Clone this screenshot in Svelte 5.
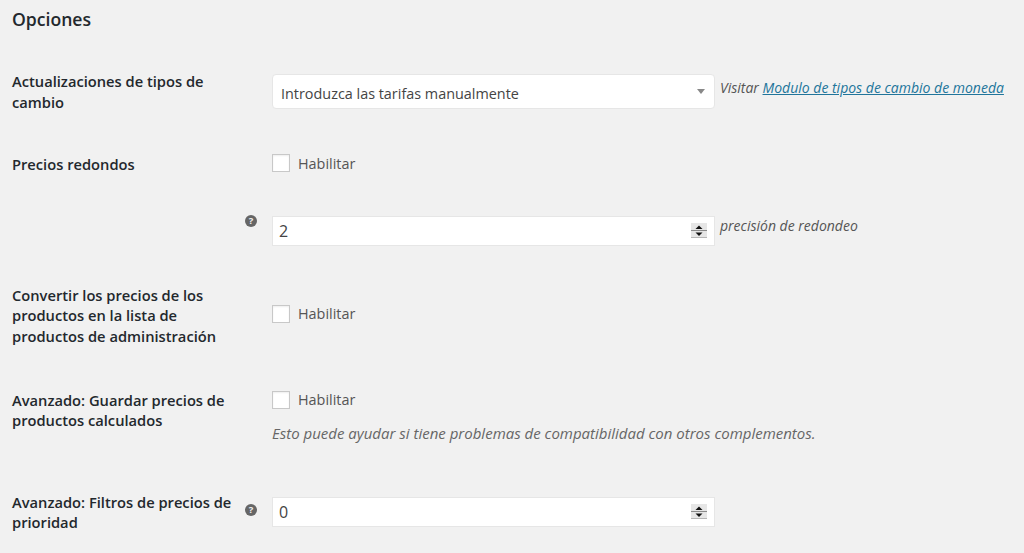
<!-- WooCommerce-style currency options form -->
<script>
  const enableLabel = "Habilitar";
</script>

{#snippet help()}
  <span class="help">?</span>
{/snippet}

{#snippet spinner()}
  <span class="spin">
    <svg width="16" height="15" viewBox="0 0 16 15">
      <rect x="0" y="0" width="16" height="15" fill="#e6e6e6" />
      <rect x="0" y="7" width="16" height="1" fill="#8a8a8a" />
      <rect x="0" y="14" width="16" height="1" fill="#b5b5b5" />
      <path d="M8 2.5 11.5 6h-7z" fill="#111" />
      <path d="M8 13 4.5 9.5h7z" fill="#111" />
    </svg>
  </span>
{/snippet}

{#snippet checkbox()}
  <label class="check">
    <span class="box"></span>
    <span>{enableLabel}</span>
  </label>
{/snippet}

<main class="page">
  <h2>Opciones</h2>

  <section class="row r1">
    <div class="label">Actualizaciones de tipos de cambio</div>
    <div class="tip"></div>
    <div class="field inline">
      <div class="select">
        <span class="value">Introduzca las tarifas manualmente</span>
        <span class="caret"></span>
      </div>
      <span class="note">Visitar <a href="#top">Modulo de tipos de cambio de moneda</a></span>
    </div>
  </section>

  <section class="row r2">
    <div class="label">Precios redondos</div>
    <div class="tip"></div>
    <div class="field">{@render checkbox()}</div>
  </section>

  <section class="row r3">
    <div class="label"></div>
    <div class="tip">{@render help()}</div>
    <div class="field inline">
      <div class="number"><span>2</span>{@render spinner()}</div>
      <span class="note">precisión de redondeo</span>
    </div>
  </section>

  <section class="row r4">
    <div class="label">Convertir los precios de los productos en la lista de productos de administración</div>
    <div class="tip"></div>
    <div class="field">{@render checkbox()}</div>
  </section>

  <section class="row r5">
    <div class="label">Avanzado: Guardar precios de productos calculados</div>
    <div class="tip"></div>
    <div class="field">
      {@render checkbox()}
      <p class="desc">Esto puede ayudar si tiene problemas de compatibilidad con otros complementos.</p>
    </div>
  </section>

  <section class="row r6">
    <div class="label">Avanzado: Filtros de precios de prioridad</div>
    <div class="tip">{@render help()}</div>
    <div class="field">
      <div class="number"><span>0</span>{@render spinner()}</div>
    </div>
  </section>
</main>

<style>
  :global(body) {
    margin: 0;
    background: #f1f1f1;
  }
  .page {
    height: 553px;
    overflow: hidden;
    padding: 9px 0 0 12px;
    box-sizing: border-box;
    font-family: "Open Sans", "Liberation Sans", sans-serif;
    font-size: 14.4px;
    color: #555;
  }
  h2 {
    margin: 0;
    font-size: 17.6px;
    line-height: 21px;
    font-weight: 600;
    color: #23282d;
  }
  .row {
    display: grid;
    grid-template-columns: 228px 32px 1fr;
    align-items: start;
  }
  .r1 {
    margin-top: 41px;
  }
  .r2 {
    margin-top: 42px;
  }
  .r3 {
    margin-top: 41px;
  }
  .r4 {
    margin-top: 39px;
  }
  .r5 {
    margin-top: 43px;
  }
  .r6 {
    margin-top: 49px;
  }
  .r3 .tip {
    margin-top: -1px;
  }
  .r4 .field {
    padding-top: 20px;
  }
  .r5 .field {
    padding-top: 1px;
  }
  .r6 .field {
    padding-top: 5px;
  }
  .r6 .tip {
    padding-top: 12px;
  }
  .label {
    font-size: 14.7px;
    font-weight: 600;
    line-height: 20.6px;
    color: #23282d;
  }
  .help {
    display: block;
    width: 12px;
    height: 12px;
    margin-left: 5px;
    border-radius: 50%;
    background: #666;
    color: #f1f1f1;
    font-size: 9.5px;
    line-height: 12px;
    font-weight: 700;
    text-align: center;
  }
  .field {
    min-width: 0;
  }
  .inline {
    display: flex;
    align-items: flex-start;
  }
  .select,
  .number {
    width: 443px;
    box-sizing: border-box;
    flex: none;
    display: flex;
    align-items: center;
    justify-content: space-between;
    background: #fff;
    border: 1px solid #e6e6e6;
    color: #444;
  }
  .select {
    height: 35px;
    padding: 0 9px 0 8px;
    border-radius: 4px;
    margin-top: 3px;
  }
  .value {
    padding-top: 3px;
  }
  .caret {
    width: 0;
    height: 0;
    border: 4.5px solid transparent;
    border-top: 5px solid #888;
    border-bottom: 0;
  }
  .number {
    height: 30px;
    padding: 0 7px 0 6px;
    font-size: 16px;
  }
  .spin {
    display: flex;
  }
  .note {
    margin-left: 5px;
    font-style: italic;
    font-size: 14px;
    line-height: 20px;
    color: #555;
    white-space: nowrap;
  }
  .r1 .note {
    padding-top: 7px;
  }
  .note a {
    color: #21759b;
  }
  .check {
    display: flex;
    align-items: center;
    gap: 8px;
    height: 18px;
  }
  .box {
    width: 16px;
    height: 16px;
    background: #fff;
    border: 1px solid #c8c8c8;
    box-shadow: inset 0 1px 2px rgba(0, 0, 0, 0.07);
  }
  .desc {
    margin: 14px 0 0;
    font-style: italic;
    font-size: 15px;
    line-height: 20px;
    color: #666;
  }
</style>
